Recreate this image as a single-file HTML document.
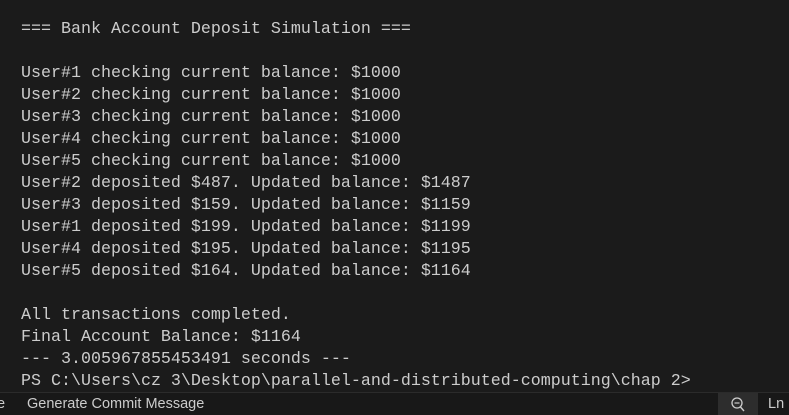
<html><head><style>
body{margin:0;width:789px;height:414px;background:#1b1b1b;overflow:hidden;position:relative}
pre{position:absolute;left:21px;top:19px;margin:0;font-family:"Liberation Mono",monospace;font-size:16.67px;line-height:22px;color:#cccccc}
#sb{position:absolute;left:0;top:392px;width:789px;height:22px;background:#181818;border-top:1px solid #2b2b2b;font-family:"Liberation Sans",sans-serif;font-size:14.5px;color:#cccccc}
#sb span{position:absolute;top:3px}
#mag{position:absolute;left:718px;top:0;width:40px;height:22px;background:#2d2d2d}
</style></head><body>
<pre>=== Bank Account Deposit Simulation ===

User#1 checking current balance: $1000
User#2 checking current balance: $1000
User#3 checking current balance: $1000
User#4 checking current balance: $1000
User#5 checking current balance: $1000
User#2 deposited $487. Updated balance: $1487
User#3 deposited $159. Updated balance: $1159
User#1 deposited $199. Updated balance: $1199
User#4 deposited $195. Updated balance: $1195
User#5 deposited $164. Updated balance: $1164

All transactions completed.
Final Account Balance: $1164
--- 3.005967855453491 seconds ---
PS C:\Users\cz 3\Desktop\parallel-and-distributed-computing\chap 2&gt;</pre>
<div id="sb"><span style="left:-3px">e</span><span style="left:27px">Generate Commit Message</span>
<div id="mag"><svg width="40" height="22"><circle cx="19" cy="10" r="5" fill="none" stroke="#ccc" stroke-width="1.3"/><line x1="16.5" y1="10" x2="21.5" y2="10" stroke="#ccc" stroke-width="1.2"/><line x1="22.5" y1="14" x2="26" y2="18" stroke="#ccc" stroke-width="1.4"/></svg></div>
<span style="left:768px">Ln</span></div>
</body></html>
